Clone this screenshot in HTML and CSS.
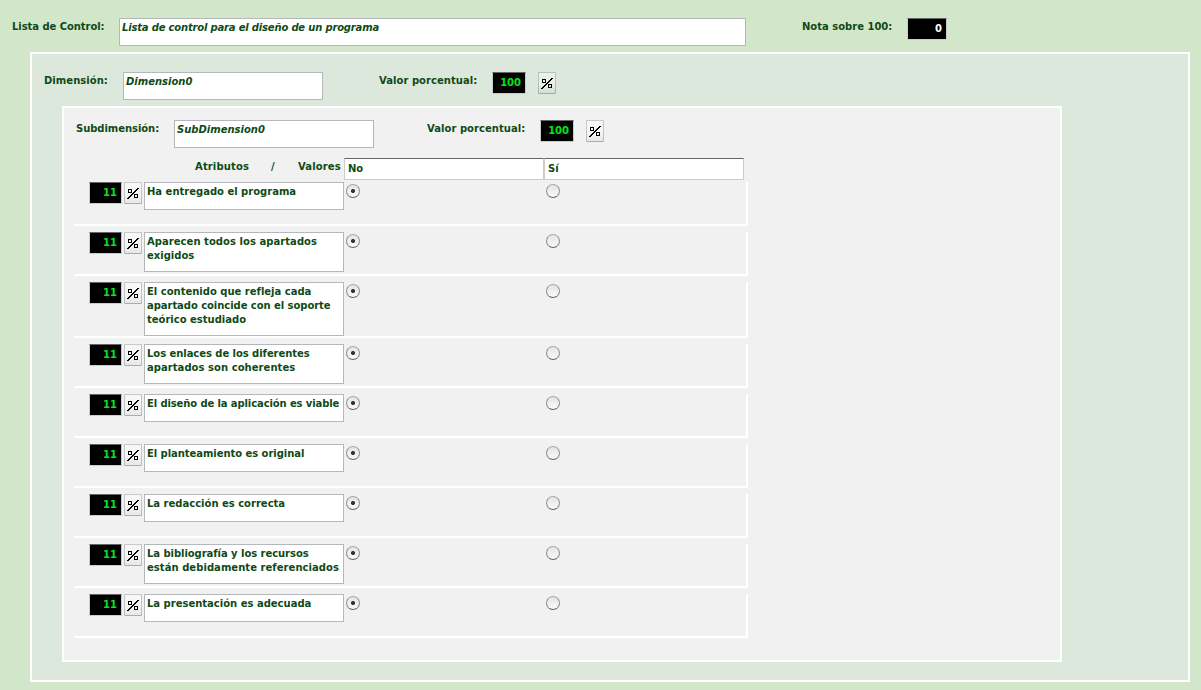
FILE: index.html
```html
<!DOCTYPE html>
<html lang="es">
<head>
<meta charset="utf-8">
<title>Lista de control</title>
<link rel="stylesheet" href="styles.css">
</head>
<body>
<svg class="defs" aria-hidden="true"><symbol id="pct" viewBox="0 0 12 11" shape-rendering="crispEdges"><path d="M10 0h2v1h-2zM9 1h2v1h-2zM8 2h2v1h-2zM7 3h2v1h-2zM6 4h2v1h-2zM5 5h2v1h-2zM4 6h2v1h-2zM3 7h2v1h-2zM2 8h2v1h-2zM1 9h2v1h-2zM0 10h2v1h-2z"/><path fill="none" stroke="#000" d="M1.5 1.5h3v3h-3zM7.500 6.500h3v3h-3z"/></symbol></svg>
<header class="bar title-bar">
  <span class="label title-label">Lista de Control:</span>
  <div class="field title-field">Lista de control para el diseño de un programa</div>
  <span class="label grade-label">Nota sobre 100:</span>
  <div class="num grade">0</div>
</header>
<section class="dimension">
  <div class="bar">
    <span class="label dim-label">Dimensión:</span>
    <div class="field name">Dimension0</div>
    <span class="label value-label">Valor porcentual:</span>
    <div class="num total">100</div>
    <button class="pct"><svg><use href="#pct"/></svg></button>
  </div>
  <section class="subdimension">
    <div class="bar">
      <span class="label sub-label">Subdimensión:</span>
      <div class="field name">SubDimension0</div>
      <span class="label sub-value-label">Valor porcentual:</span>
      <div class="num total">100</div>
      <button class="pct"><svg><use href="#pct"/></svg></button>
    </div>
    <div class="head">
      <span class="attrs">Atributos</span><span class="slash">/</span><span class="vals">Valores</span>
      <div class="col">No</div><div class="col">Sí</div>
    </div>
    <div class="rows">
      <div class="row"><div class="num">11</div><button class="pct"><svg><use href="#pct"/></svg></button><div class="field item">Ha entregado el programa</div><i class="radio on"></i><i class="radio"></i></div>
      <div class="row"><div class="num">11</div><button class="pct"><svg><use href="#pct"/></svg></button><div class="field item two"><span class="loose">Aparecen todos los apartados</span><br>exigidos</div><i class="radio on"></i><i class="radio"></i></div>
      <div class="row"><div class="num">11</div><button class="pct"><svg><use href="#pct"/></svg></button><div class="field item three">El contenido que refleja cada<br><span class="snug">apartado coincide con el soporte</span><br>teórico estudiado</div><i class="radio on"></i><i class="radio"></i></div>
      <div class="row"><div class="num">11</div><button class="pct"><svg><use href="#pct"/></svg></button><div class="field item two"><span class="snug">Los enlaces de los diferentes</span><br><span class="loose">apartados son coherentes</span></div><i class="radio on"></i><i class="radio"></i></div>
      <div class="row"><div class="num">11</div><button class="pct"><svg><use href="#pct"/></svg></button><div class="field item"><span class="tight">El diseño de la aplicación es viable</span></div><i class="radio on"></i><i class="radio"></i></div>
      <div class="row"><div class="num">11</div><button class="pct"><svg><use href="#pct"/></svg></button><div class="field item"><span class="snug">El planteamiento es original</span></div><i class="radio on"></i><i class="radio"></i></div>
      <div class="row"><div class="num">11</div><button class="pct"><svg><use href="#pct"/></svg></button><div class="field item">La redacción es correcta</div><i class="radio on"></i><i class="radio"></i></div>
      <div class="row"><div class="num">11</div><button class="pct"><svg><use href="#pct"/></svg></button><div class="field item two"><span class="snug">La bibliografía y los recursos</span><br><span class="loose">están debidamente referenciados</span></div><i class="radio on"></i><i class="radio"></i></div>
      <div class="row"><div class="num">11</div><button class="pct"><svg><use href="#pct"/></svg></button><div class="field item">La presentación es adecuada</div><i class="radio on"></i><i class="radio"></i></div>
    </div>
  </section>
</section>
</body>
</html>
```
FILE: styles.css
```css
* { box-sizing: border-box; }
body { margin: 0; height: 690px; overflow: hidden; background: #d2e6c9; color: #0f4a16; font: bold 10px/14px "DejaVu Sans", Verdana, sans-serif; }
.defs { display: none; }
.bar { display: flex; align-items: flex-start; white-space: nowrap; }
.label { flex: none; margin-top: 2px; }
.title-bar { height: 52px; padding: 18px 0 0 12px; }
.title-label { width: 107px; letter-spacing: -.06px; }
.grade-label { width: 105px; margin-left: 56px; }
.field { flex: none; height: 28px; padding: 2px; border: 1px solid #b4b8bb; background: #fff; white-space: nowrap; }
.bar .field { font-style: italic; }
.bar .title-field { width: 627px; letter-spacing: -.18px; }
.name { width: 200px; }
.num { flex: none; width: 33px; height: 22px; padding: 3px 4px 0 0; border: 1px solid #c9cdc9; border-top-color: #666; background: #000; color: #00e61a; text-align: right; }
.grade { width: 40px; color: #fff; }
.total { width: 34px; }
.pct { flex: none; display: block; width: 18px; height: 22px; padding: 1px 0 0 2px; border: 1px solid; border-color: rgba(0,0,0,.13) rgba(0,0,0,.2) rgba(0,0,0,.3) rgba(0,0,0,.2); border-radius: 1px; background: linear-gradient(rgba(255,255,255,.45), rgba(255,255,255,.35) 50%, rgba(0,0,0,.04)); }
.pct svg { display: block; width: 12px; height: 11px; }
.bar .pct { margin-left: 12px; }
.dimension { width: 1160px; height: 630px; margin-left: 30px; padding: 18px 0 0 12px; border: 2px solid #fff; background: #dde8dc; }
.dim-label { width: 79px; letter-spacing: .05px; }
.value-label { width: 113px; margin-left: 56px; letter-spacing: .04px; }
.sub-label { width: 98px; letter-spacing: -.05px; }
.sub-value-label { width: 113px; margin-left: 53px; letter-spacing: .04px; }
.subdimension { width: 1000px; height: 556px; margin: 6px 0 0 18px; padding: 12px 0 0 10px; border: 2px solid #fff; background: #f1f1f1; }
.subdimension .bar { padding-left: 2px; }
.head { display: flex; height: 22px; margin-top: 10px; padding-left: 121px; }
.head span { flex: none; padding-top: 2px; }
.attrs { width: 76px; letter-spacing: .14px; }
.slash { width: 27px; }
.vals { width: 46px; letter-spacing: .12px; }
.col { width: 200px; padding: 3px 3px 0; border: 1px solid #ccc; border-top-color: #666; background: #fff; }
.rows { display: flex; flex-direction: column; gap: 6px; width: 674px; margin-top: 2px; }
.row { display: flex; align-items: flex-start; min-height: 44px; padding-left: 15px; border: solid #fff; border-width: 0 2px 2px 0; }
.row .pct, .row .item { margin-left: 2px; }
.item { width: 200px; }
.two { height: 40px; }
.three { height: 54px; }
.loose { letter-spacing: .05px; }
.snug { letter-spacing: -.05px; }
.tight { letter-spacing: -.11px; }
.radio { flex: none; width: 14px; height: 14px; margin: 2px 186px 0 2px; border: 1px solid #8e8e8e; border-top-color: #aaa; border-bottom-color: #666; border-radius: 50%; background: linear-gradient(#e4e4e4, #fafafa); }
.radio + .radio { margin-left: 0; margin-right: 0; }
.on { background: radial-gradient(circle at 50% 50%, #30363d 0 1.600px, transparent 2.400px), linear-gradient(#e4e4e4, #fafafa); }
```
